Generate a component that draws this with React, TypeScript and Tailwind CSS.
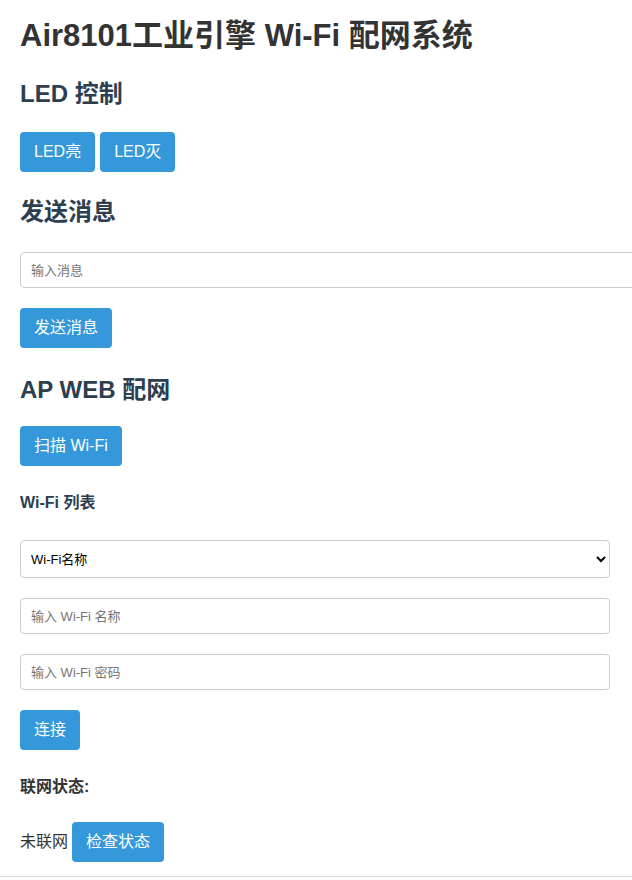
import React, { useState } from 'react';

const FONT = '"Liberation Sans", Arial, "Noto Sans CJK SC", sans-serif';

const Btn: React.FC<{ children: React.ReactNode; onClick?: () => void }> = ({ children, onClick }) => (
  <button
    onClick={onClick}
    className="h-10 px-[14px] bg-[#3498db] text-white text-[16px] leading-5 rounded-[4px] hover:bg-[#2980b9]"
  >
    {children}
  </button>
);

export default function App() {
  const [message, setMessage] = useState('');
  const [ssid, setSsid] = useState('');
  const [password, setPassword] = useState('');
  const [status] = useState('未联网');

  return (
    <div className="w-[632px] min-h-[880px] overflow-hidden bg-white" style={{ fontFamily: FONT }}>
      <div className="px-5 pt-4">
        {/* Title */}
        <h1 className="text-[31px] leading-10 font-bold text-[#333] whitespace-nowrap">
          Air8101工业引擎 Wi-Fi 配网系统
        </h1>

        {/* LED */}
        <h2 className="mt-[22px] text-[24px] leading-8 font-bold text-[#2c3e50]">LED 控制</h2>
        <div className="mt-[22px] flex gap-[5px]">
          <Btn>LED亮</Btn>
          <Btn>LED灭</Btn>
        </div>

        {/* Message */}
        <h2 className="mt-6 text-[24px] leading-8 font-bold text-[#2c3e50]">发送消息</h2>
        <input
          type="text"
          value={message}
          onChange={(e) => setMessage(e.target.value)}
          placeholder="输入消息"
          className="mt-6 block w-[622px] h-9 px-[10px] border border-[#ccc] rounded-[4px] text-[13px] placeholder:text-[#757575] outline-none"
        />
        <div className="mt-5">
          <Btn>发送消息</Btn>
        </div>

        {/* AP WEB */}
        <h2 className="mt-[26px] text-[24px] leading-8 font-bold text-[#2c3e50]">AP WEB 配网</h2>
        <div className="mt-5">
          <Btn>扫描 Wi-Fi</Btn>
        </div>

        <h3 className="mt-[27px] text-[16px] leading-5 font-bold text-[#2c3e50]">Wi-Fi 列表</h3>
        <select className="mt-[27px] block w-[590px] h-[38px] px-[6px] border border-[#ccc] rounded-[4px] text-[13px] text-black bg-white">
          <option>Wi-Fi名称</option>
        </select>
        <input
          type="text"
          value={ssid}
          onChange={(e) => setSsid(e.target.value)}
          placeholder="输入 Wi-Fi 名称"
          className="mt-5 block w-[590px] h-9 px-[10px] border border-[#ccc] rounded-[4px] text-[13px] placeholder:text-[#757575] outline-none"
        />
        <input
          type="password"
          value={password}
          onChange={(e) => setPassword(e.target.value)}
          placeholder="输入 Wi-Fi 密码"
          className="mt-5 block w-[590px] h-9 px-[10px] border border-[#ccc] rounded-[4px] text-[13px] placeholder:text-[#757575] outline-none"
        />
        <div className="mt-5">
          <Btn>连接</Btn>
        </div>

        <h3 className="mt-[27px] text-[16px] leading-5 font-bold text-[#333]">联网状态:</h3>
        <div className="mt-[25px] flex items-center gap-1">
          <span className="text-[16px] text-[#333]">{status}</span>
          <Btn>检查状态</Btn>
        </div>
      </div>
      <div className="mt-[14px] border-t border-[#ddd]" />
    </div>
  );
}
